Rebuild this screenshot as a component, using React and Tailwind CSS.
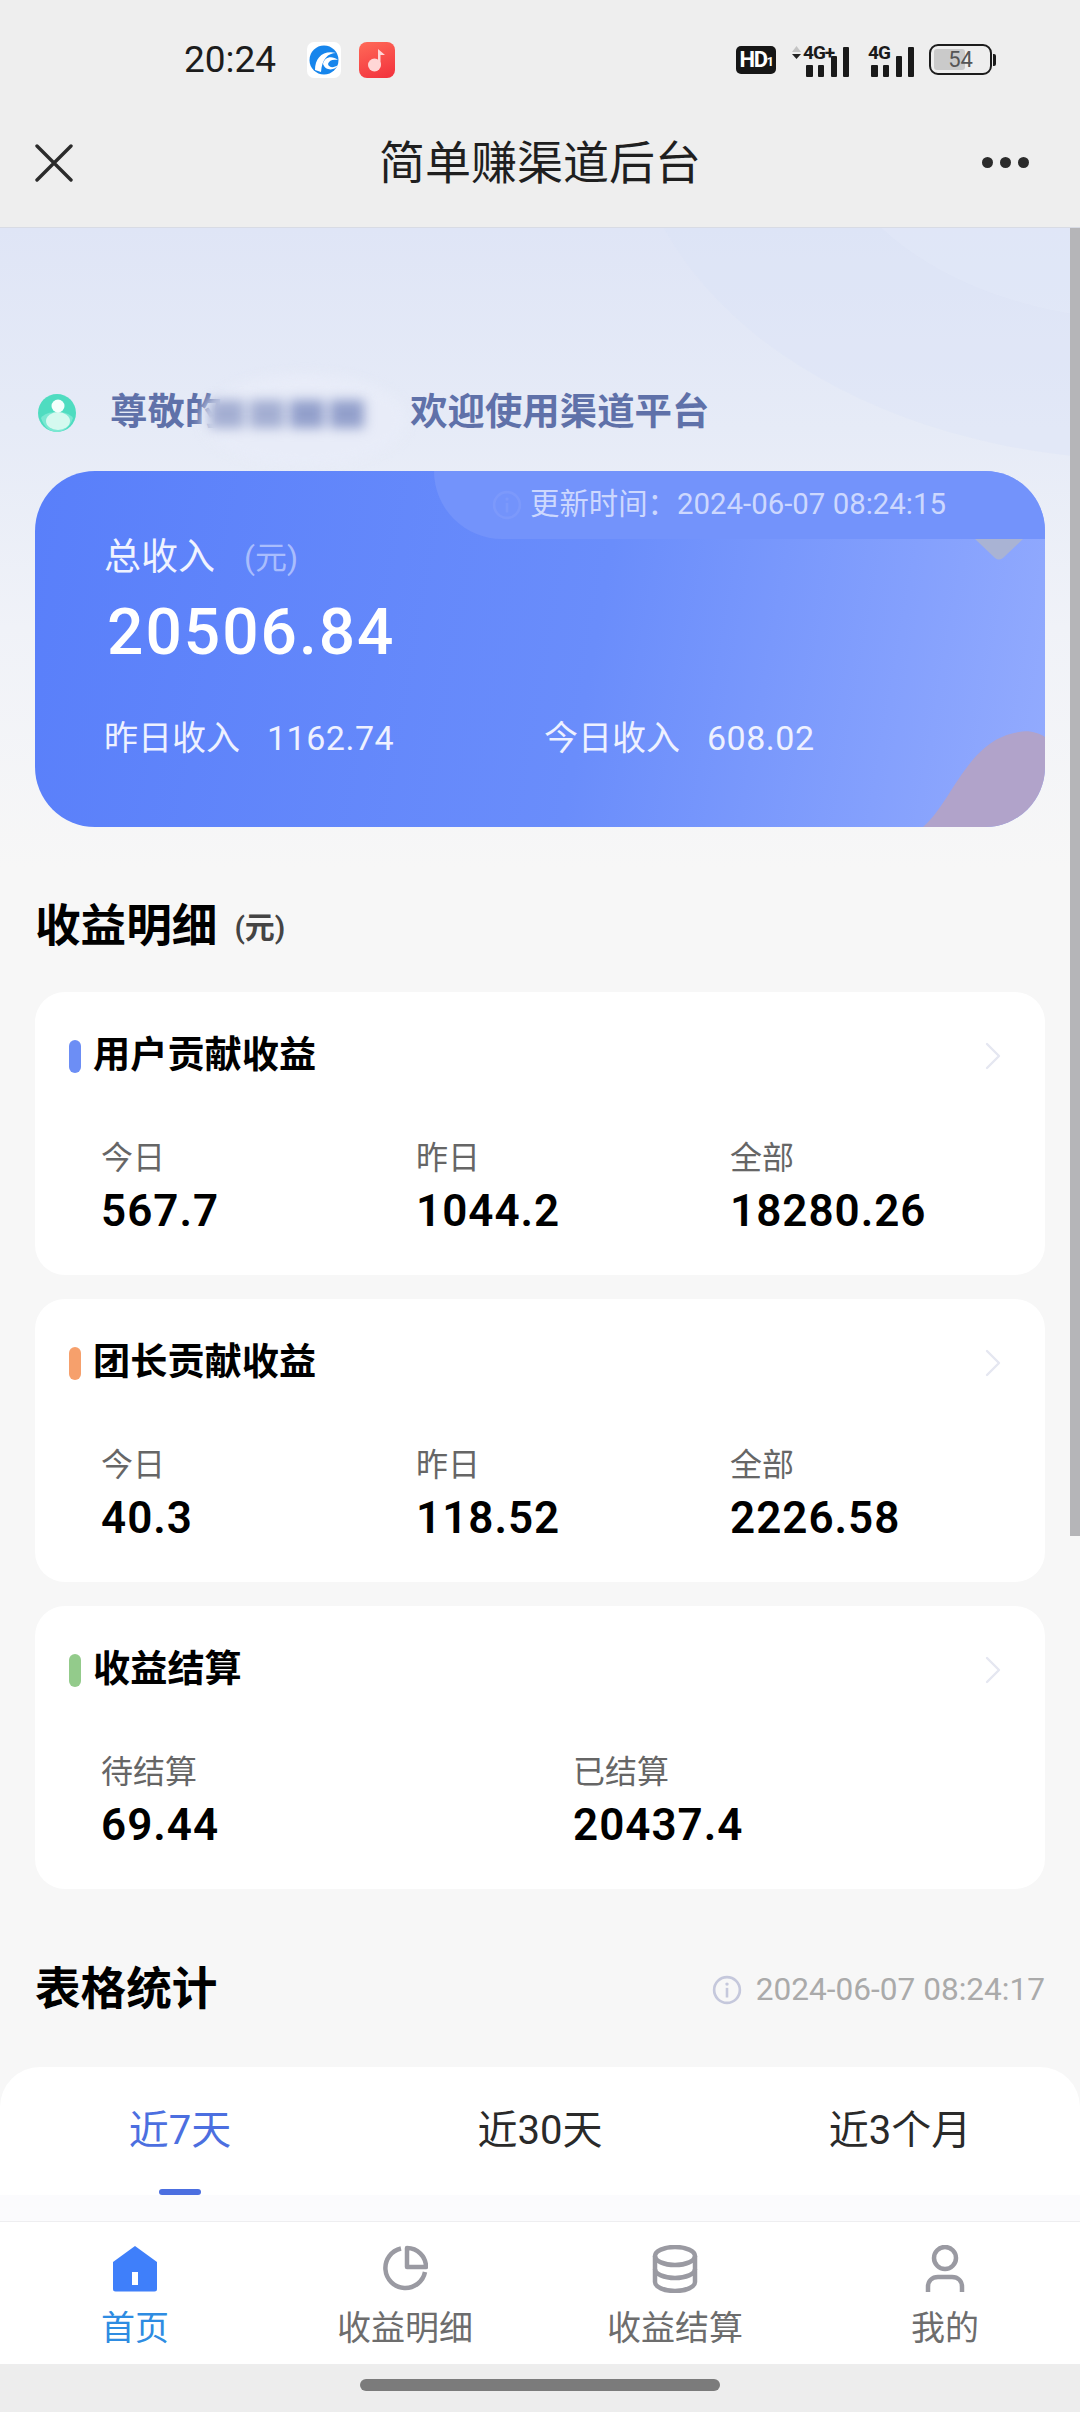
import { ChevronRight } from 'lucide-react';

function InfoIcon({ size = 30, color = '#c5c8dc' }) {
  return (
    <svg width={size} height={size} viewBox="0 0 28 28" fill="none" className="shrink-0">
      <circle cx="14" cy="14" r="12" stroke={color} strokeWidth="2.5" />
      <circle cx="14" cy="8.5" r="1.6" fill={color} />
      <rect x="12.8" y="12" width="2.4" height="9" fill={color} />
    </svg>
  );
}

function Signal({ label, arrows }) {
  return (
    <div className={arrows ? 'relative w-[62px] h-[34px]' : 'relative w-[46px] h-[34px]'}>
      <svg width={arrows ? 62 : 46} height="34" viewBox={arrows ? '0 0 62 34' : '0 0 46 34'} className="block">
        {arrows && (
          <>
            <path d="M2 9 L6.5 3 L11 9 Z" fill="#c4c4c4" />
            <path d="M2 11 L11 11 L6.5 16 Z" fill="#222" />
          </>
        )}
        <g fill="#1a1a1a" transform={arrows ? 'translate(16 0)' : 'translate(3 0)'}>
          <rect x="0" y="22" width="7" height="12" rx="1" />
          <rect x="12" y="22" width="6" height="12" rx="1" />
          <rect x="25" y="13" width="6" height="21" rx="1" />
          <rect x="37" y="4" width="6" height="30" rx="1" />
        </g>
      </svg>
      <span
        className={
          arrows
            ? 'absolute left-[13px] top-0 text-[19px] leading-[20px] font-bold text-[#1a1a1a] tracking-[-1px]'
            : 'absolute left-0 top-0 text-[19px] leading-[20px] font-bold text-[#1a1a1a] tracking-[-1px]'
        }
      >
        {label}
      </span>
    </div>
  );
}

function StatusBar() {
  return (
    <div className="h-[100px] shrink-0 flex items-center pl-[184px] pr-[84px] pt-[19px]">
      <span className="text-[37px] text-[#1c1c1c] w-[123px]">20:24</span>
      <div className="w-[34px] h-[36px] rounded-[7px] bg-white flex items-center justify-center">
        <svg width="30" height="30" viewBox="0 0 30 30">
          <circle cx="15" cy="15" r="14.5" fill="#1685ec" />
          <path d="M6 25 C6 13 14 5 27 8 C19 8 13 14 12 27 Z" fill="#fff" />
          <path d="M14 19 C15 12 23 10 29 15 C24 14 20 15 19 19 C20 23 25 23 29 20 C27 25 17 27 14 19 Z" fill="#fff" />
        </svg>
      </div>
      <div className="ml-[18px] w-[36px] h-[36px] rounded-[8px] bg-[linear-gradient(160deg,#ff6a58,#f2303c)] flex items-center justify-center">
        <svg width="24" height="26" viewBox="0 0 24 26">
          <circle cx="9.5" cy="18" r="6.5" fill="#ffd6d6" />
          <path d="M13 18 V2 L20 8 L15.5 8 V18 Z" fill="#ffd6d6" />
        </svg>
      </div>
      <div className="ml-auto flex items-center">
        <span className="w-[40px] h-[28px] rounded-[5px] bg-[#161616] text-white text-[22px] font-bold tracking-[-1.5px] flex items-center justify-center">
          HD<span className="text-[13px] mt-[5px]">1</span>
        </span>
        <span className="ml-[14px]"><Signal label="4G+" arrows /></span>
        <span className="ml-[16px]"><Signal label="4G" /></span>
        <div className="ml-[15px] relative w-[63px] h-[31px] rounded-[9px] border-[2.5px] border-[#1c1c1c] p-[3px] flex">
          <div className="w-[31px] h-full rounded-[3px] bg-[#cacaca]" />
          <span className="absolute inset-0 flex items-center justify-center text-[22px] text-[#555]">54</span>
        </div>
        <div className="ml-[1px] w-[3px] h-[12px] rounded-r-[2px] bg-[#1c1c1c]" />
      </div>
    </div>
  );
}

function Header() {
  return (
    <div className="h-[128px] shrink-0 grid grid-cols-[1fr_auto_1fr] items-center px-[35px] border-b border-[#d8dbe4] pb-[2px]">
      <svg width="38" height="38" viewBox="0 0 38 38" stroke="#2b2b2b" strokeWidth="3.4" strokeLinecap="round">
        <path d="M2 2 L36 36 M36 2 L2 36" />
      </svg>
      <span className="text-[46px] leading-none text-[#1f1f1f]">简单赚渠道后台</span>
      <div className="flex gap-[7px] justify-end mr-[16px]">
        <span className="w-[11px] h-[11px] rounded-full bg-[#2b2b2b]" />
        <span className="w-[11px] h-[11px] rounded-full bg-[#2b2b2b]" />
        <span className="w-[11px] h-[11px] rounded-full bg-[#2b2b2b]" />
      </div>
    </div>
  );
}

function Greeting() {
  return (
    <div className="relative h-[60px] flex items-center pl-[38px] pt-[3px] text-[37.4px] font-semibold text-[#5f71a9]">
      <svg width="38" height="38" viewBox="0 0 38 38" className="mr-[34px] shrink-0">
        <circle cx="19" cy="19" r="19" fill="#4fdcc0" />
        <path d="M3 24 C8 16 30 16 35 24 C32 33 25 38 19 38 C12 38 6 33 3 24 Z" fill="#7be8d2" />
        <ellipse cx="20" cy="27" rx="12" ry="9" fill="#d5f9ef" />
        <circle cx="20" cy="12" r="6.5" fill="#f4fffc" />
      </svg>
      <span>尊敬的</span>
      <span className="relative w-[188px] h-full">
        <span className="absolute -left-[20px] -top-[10px] w-[205px] h-[92px] rounded-[50%] bg-[#e8ecf8] blur-[6px]" />
        <span className="absolute -left-[12px] top-[16px] flex gap-[6px] blur-[6px]">
          <span className="w-[34px] h-[28px] bg-[#a3aed2]" />
          <span className="w-[34px] h-[28px] bg-[#a3aed2]" />
          <span className="w-[34px] h-[28px] bg-[#929fcb]" />
          <span className="w-[34px] h-[28px] bg-[#929fcb]" />
        </span>
      </span>
      <span className="relative">欢迎使用渠道平台</span>
    </div>
  );
}

function IncomeCard() {
  return (
    <div className="relative mx-[35px] mt-[30px] h-[356px] rounded-[60px] overflow-hidden bg-[linear-gradient(100deg,#597ffa,#6a8dfb_55%,#93abfe)] text-white">
      <div className="absolute right-0 top-0 w-[611px] h-[68px] rounded-bl-[68px] bg-[#7393fb]" />
      <svg className="absolute right-[22px] top-[68px]" width="48" height="21" viewBox="0 0 48 21">
        <path d="M0 0 H48 L28 19 Q24 22 20 19 Z" fill="#a9b3d4" />
      </svg>
      <svg className="absolute right-0 bottom-0" width="122" height="96" viewBox="0 0 122 96">
        <path d="M0 96 C30 70 45 8 96 1 C106 -1 116 2 122 6 V96 Z" fill="#b1a3ca" />
      </svg>
      <div className="relative">
        <div className="h-[62px] pt-[5px] pl-[457px] flex items-center text-[29.4px] text-[#cdd8fe]">
          <InfoIcon size={30} color="#7c99fb" />
          <span className="ml-[8px] whitespace-nowrap">更新时间：2024-06-07 08:24:15</span>
        </div>
        <div className="pl-[69px] flex items-center h-[50px]">
          <span className="text-[37px] text-[#f0f3ff]">总收入</span>
          <span className="ml-[29px] text-[32px] text-[#a9bdfd]">(元)</span>
        </div>
        <div className="pl-[72px] mt-[14px] h-[72px] flex items-center text-[64px] leading-none font-medium tracking-[2px]">20506.84</div>
        <div className="flex items-center mt-[44px] h-[50px] pl-[69px] text-[#eef1ff]">
          <span className="w-[163px] text-[34px]">昨日收入</span>
          <span className="w-[277px] text-[34px] tracking-[0.5px]">1162.74</span>
          <span className="w-[163px] text-[34px]">今日收入</span>
          <span className="text-[34px] tracking-[0.5px]">608.02</span>
        </div>
      </div>
    </div>
  );
}

function StatCard({ title, barColor, cols, stats }) {
  return (
    <div className="bg-white rounded-[30px] h-[283px] px-[34px] pt-[40px] mx-[35px]">
      <div className="flex items-center h-[48px]">
        <span className="w-[12px] h-[33px] rounded-full shrink-0" style={{ backgroundColor: barColor }} />
        <span className="ml-[12px] text-[37.2px] font-bold text-black leading-none">{title}</span>
        <ChevronRight className="ml-auto mr-[-6px]" size={48} strokeWidth={1.2} color="#e5e7f1" />
      </div>
      <div className={cols === 3 ? 'grid grid-cols-[315px_314px_1fr] pl-[32px] mt-[56px]' : 'grid grid-cols-[472px_1fr] pl-[32px] mt-[56px]'}>
        {stats.map((s) => (
          <div key={s.label}>
            <div className="text-[32px] leading-[44px] text-[#666]">{s.label}</div>
            <div className="text-[44px] leading-[56px] font-semibold text-black tracking-[1px] mt-[3px]">{s.value}</div>
          </div>
        ))}
      </div>
    </div>
  );
}

function BottomNav() {
  const gray = '#9a9aa2';
  const items = [
    {
      label: '首页',
      active: true,
      icon: (
        <svg width="46" height="48" viewBox="0 0 46 48">
          <path d="M23 1 L45 17 V44 a2.5 2.5 0 0 1 -2.5 2.5 H3.5 A2.5 2.5 0 0 1 1 44 V17 Z" fill="#3f7ffa" />
          <rect x="20" y="27" width="6" height="13" fill="#fff" />
        </svg>
      ),
    },
    {
      label: '收益明细',
      icon: (
        <svg width="46" height="48" viewBox="0 0 46 48" fill="none" stroke={gray} strokeWidth="4.5">
          <path d="M19 3.5 A20 20 0 1 0 43 27" />
          <path d="M25 3 A19 19 0 0 1 44 22 H25 Z" strokeLinejoin="round" />
        </svg>
      ),
    },
    {
      label: '收益结算',
      icon: (
        <svg width="46" height="48" viewBox="0 0 46 48" fill="none" stroke={gray} strokeWidth="4.5">
          <ellipse cx="23" cy="11" rx="20" ry="9" />
          <path d="M3 11 V37 C3 42 12 46 23 46 C34 46 43 42 43 37 V11" />
          <path d="M3 24 C3 29 12 33 23 33 C34 33 43 29 43 24" />
        </svg>
      ),
    },
    {
      label: '我的',
      icon: (
        <svg width="46" height="48" viewBox="0 0 46 48" fill="none" stroke={gray} strokeWidth="4.5">
          <circle cx="23" cy="13" r="11" />
          <path d="M6 47 V42 C6 36 10 32 16 32 H30 C36 32 40 36 40 42 V47" />
        </svg>
      ),
    },
  ];
  return (
    <div className="h-[143px] shrink-0 bg-white border-t border-[#eeeef0] grid grid-cols-4 pt-[23px]">
      {items.map((it) => (
        <div key={it.label} className="flex flex-col items-center">
          {it.icon}
          <span className={it.active ? 'mt-[11px] text-[34px] leading-[48px] text-[#2e8ce2]' : 'mt-[11px] text-[34px] leading-[48px] text-[#6d6d6d]'}>
            {it.label}
          </span>
        </div>
      ))}
    </div>
  );
}

export default function App() {
  return (
    <div className="relative w-[1080px] h-[2412px] overflow-hidden flex flex-col bg-[#eeeeee] font-[Roboto,'Noto_Sans_CJK_SC',sans-serif]">
      <StatusBar />
      <Header />
      <div className="relative overflow-hidden flex-1 min-h-0 flex flex-col pt-[153px] bg-[linear-gradient(180deg,#dfe5f6_0,#e6ebf7_200px,#f0f2f8_400px,#f7f7f7_640px)]">
        <div className="absolute left-[630px] -top-[488px] w-[1040px] h-[720px] rounded-[50%] bg-[#d9e3f5]/35" />
        <div className="absolute left-[820px] -top-[348px] w-[660px] h-[440px] rounded-[50%] bg-[#e6ecf8]/35" />
        <div className="relative flex flex-col flex-1 min-h-0">
          <Greeting />
          <IncomeCard />
          <div className="mt-[70px] h-[60px] px-[35px] flex items-center">
            <span className="text-[45.6px] font-bold text-black">收益明细</span>
            <span className="ml-[17px] text-[30px] font-semibold text-[#444]">(元)</span>
          </div>
          <div className="mt-[35px] flex flex-col gap-[24px]">
            <StatCard
              title="用户贡献收益"
              barColor="#6c8ef5"
              cols={3}
              stats={[
                { label: '今日', value: '567.7' },
                { label: '昨日', value: '1044.2' },
                { label: '全部', value: '18280.26' },
              ]}
            />
            <StatCard
              title="团长贡献收益"
              barColor="#f6a06c"
              cols={3}
              stats={[
                { label: '今日', value: '40.3' },
                { label: '昨日', value: '118.52' },
                { label: '全部', value: '2226.58' },
              ]}
            />
            <StatCard
              title="收益结算"
              barColor="#93cb8b"
              cols={2}
              stats={[
                { label: '待结算', value: '69.44' },
                { label: '已结算', value: '20437.4' },
              ]}
            />
          </div>
          <div className="mt-[71px] h-[60px] px-[35px] flex items-center justify-between">
            <span className="text-[45.6px] font-bold text-black">表格统计</span>
            <div className="flex items-center gap-[14px] text-[31.6px] text-[#aaaaaa]">
              <InfoIcon />
              <span>2024-06-07 08:24:17</span>
            </div>
          </div>
          <div className="mt-[47px] flex-1 min-h-0 bg-white rounded-t-[40px] flex flex-col">
            <div className="grid grid-cols-3 pt-[35px] text-center text-[40px] leading-[58px]">
              <div className="flex flex-col items-center text-[#4c6fe0]">
                近7天
                <span className="mt-[29px] w-[42px] h-[6px] rounded-full bg-[#4c6fe0]" />
              </div>
              <div className="text-[#2a2a2a]">近30天</div>
              <div className="text-[#2a2a2a]">近3个月</div>
            </div>
            <div className="flex-1 bg-[#fbfbfd]" />
          </div>
        </div>
      </div>
      <BottomNav />
      <div className="h-[48px] shrink-0 bg-[#ededed] flex justify-center pt-[15px]">
        <span className="w-[360px] h-[12px] rounded-full bg-[#7b7b7b]" />
      </div>
      {/* scrollbar thumb sits over the page */}
      <div className="absolute right-0 top-[228px] w-[10px] h-[1308px] bg-[#b5b5b8]" />
    </div>
  );
}
